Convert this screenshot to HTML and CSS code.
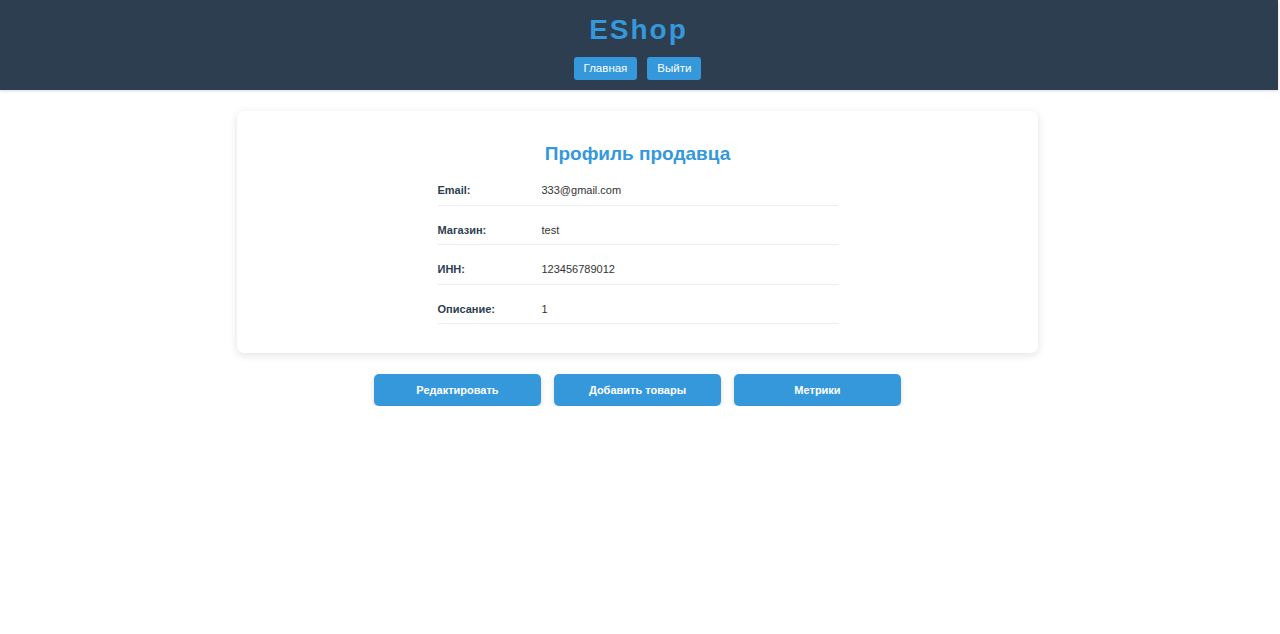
FILE: index.html
```html
<!DOCTYPE html>
<html lang="ru">
<head>
<meta charset="utf-8">
<title>EShop</title>
<link rel="stylesheet" href="styles.css">
</head>
<body>
<header class="header">
  <h1 class="logo">EShop</h1>
  <nav class="nav">
    <a class="nav-btn" href="#">Главная</a>
    <a class="nav-btn" href="#">Выйти</a>
  </nav>
</header>
<main class="main">
  <section class="card">
    <h2 class="card-title">Профиль продавца</h2>
    <div class="info">
      <div class="row"><span class="label">Email:</span><span class="value">333@gmail.com</span></div>
      <div class="row"><span class="label">Магазин:</span><span class="value">test</span></div>
      <div class="row"><span class="label">ИНН:</span><span class="value">123456789012</span></div>
      <div class="row"><span class="label">Описание:</span><span class="value">1</span></div>
    </div>
  </section>
  <div class="actions">
    <button class="action">Редактировать</button>
    <button class="action">Добавить товары</button>
    <button class="action">Метрики</button>
  </div>
</main>
</body>
</html>
```

FILE: styles.css
```css
* { box-sizing: border-box; }
html, body { margin: 0; padding: 0; }
body {
  font-family: "Liberation Sans", Arial, sans-serif;
  background: #ffffff;
  color: #333333;
  padding-right: 5px;
}
.header {
  background: #2c3e50;
  height: 90px;
  margin-right: -3px;
  padding-right: 3px;
  padding-top: 14px;
  display: flex;
  flex-direction: column;
  align-items: center;
  box-shadow: 0 1px 3px rgba(0,0,0,0.15);
}
.logo {
  margin: 0;
  font-size: 28px;
  line-height: 32px;
  font-weight: 700;
  letter-spacing: 2px;
  padding-left: 2px;
  color: #3498db;
}
.nav {
  display: flex;
  gap: 10px;
  margin-top: 11px;
}
.nav-btn {
  display: block;
  background: #3498db;
  color: #ffffff;
  text-decoration: none;
  font-size: 11.5px;
  line-height: 23px;
  height: 23px;
  padding: 0 10px;
  border-radius: 3px;
}
.main {
  display: flex;
  flex-direction: column;
  align-items: center;
  padding-top: 21px;
}
.card {
  width: 801px;
  background: #ffffff;
  border-radius: 7px;
  box-shadow: 0 2px 8px rgba(0,0,0,0.12);
  padding: 32px 0 29px;
  display: flex;
  flex-direction: column;
  align-items: center;
}
.card-title {
  margin: 0 0 11.5px;
  font-size: 19px;
  line-height: 22px;
  color: #3498db;
  font-weight: 700;
}
.info {
  width: 400px;
  display: flex;
  flex-direction: column;
  gap: 10.5px;
}
.row {
  display: flex;
  align-items: center;
  line-height: 13px;
  padding: 7.5px 0 7.5px;
  border-bottom: 1px solid #eeeeee;
  font-size: 11px;
}
.label {
  width: 104px;
  font-weight: 700;
  color: #2c3e50;
}
.value {
  color: #333333;
}
.actions {
  display: flex;
  gap: 13px;
  margin-top: 21px;
}
.action {
  width: 167px;
  height: 32px;
  border: none;
  border-radius: 5px;
  background: #3498db;
  color: #ffffff;
  font-family: "Liberation Sans", Arial, sans-serif;
  font-size: 11px;
  font-weight: 700;
  box-shadow: 0 2px 5px rgba(0,0,0,0.15);
  cursor: pointer;
}
```
